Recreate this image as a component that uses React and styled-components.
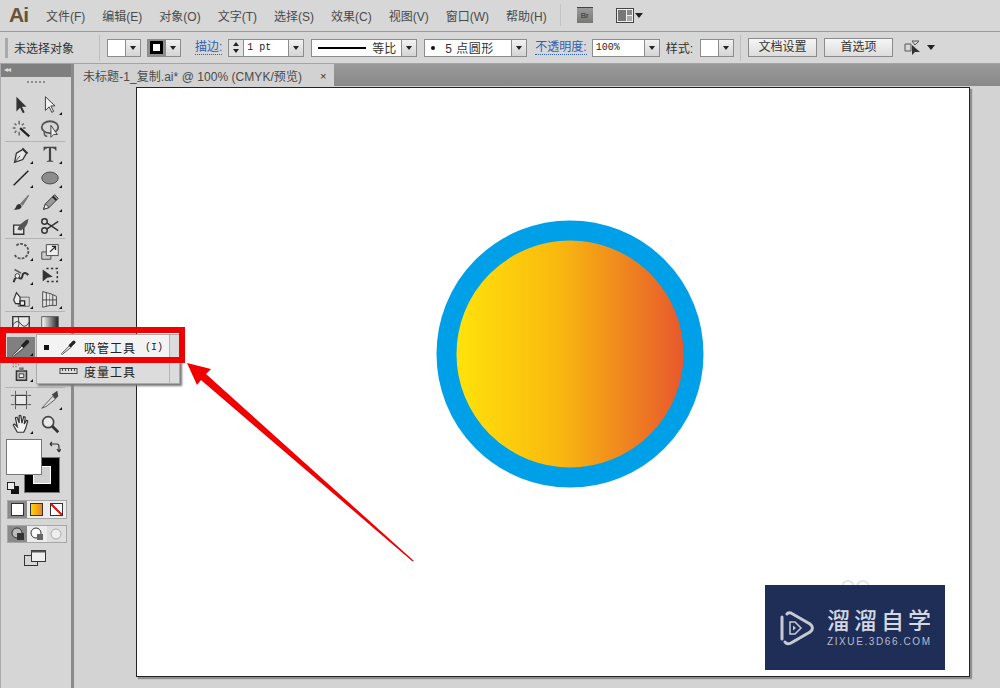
import React from 'react';
import styled, { createGlobalStyle } from 'styled-components';

const GlobalStyle = createGlobalStyle`
  html, body {
    margin: 0;
    padding: 0;
    background: #d6d6d6;
  }
  body {
    font-family: "Liberation Sans", "Noto Sans CJK SC", sans-serif;
    overflow: hidden;
  }
`;

const Page = styled.div`
  position: relative;
  width: 1000px;
  height: 688px;
  overflow: hidden;
  display: flex;
  flex-direction: column;
  color: #3c3c3c;
`;

const MenuBar = styled.div`
  height: 30px;
  flex: none;
  display: flex;
  align-items: center;
  padding: 0 0 1px 9px;
  background: #d7d7d7;
  border-bottom: 1px solid #9a9a9a;
`;

const Logo = styled.div`
  width: 20px;
  margin-right: 17px;
  font: bold 21px "Liberation Sans", sans-serif;
  color: #6a5233;
  letter-spacing: -1px;
`;

const MenuList = styled.div`
  display: flex;
  gap: 17px;
`;

const MenuItem = styled.span`
  font-size: 12px;
  color: #4a4a4a;
  white-space: nowrap;
`;

const MenuDivider = styled.div`
  width: 1px;
  height: 22px;
  margin: 0 16px 0 13px;
  background: #c4c4c4;
`;

const BridgeIcon = styled.div`
  width: 16px;
  height: 15px;
  border-top: 1px solid #444;
  background: linear-gradient(#9a9a9a, #777);
  font-size: 8px;
  color: #333;
  text-align: center;
  line-height: 15px;
  margin-right: 23px;
`;

const ControlBar = styled.div`
  height: 32px;
  flex: none;
  display: flex;
  align-items: center;
  padding-left: 5px;
  background: #d7d7d7;
  border-bottom: 1px solid #a4a4a4;
  box-sizing: border-box;
`;

const Grip = styled.div`
  width: 3px;
  height: 20px;
  margin-right: 6px;
  background: #a9a9a9;
`;

const BarLabel = styled.span`
  font-size: 12px;
  color: #333;
  white-space: nowrap;
  margin-left: ${(p) => p.$ml || 0}px;
`;

const LinkLabel = styled.span`
  font-size: 12px;
  color: #2f5fb4;
  white-space: nowrap;
  margin-left: ${(p) => p.$ml || 0}px;
  border-bottom: 1px dotted #2f5fb4;
  line-height: 14px;
`;

const BarDivider = styled.div`
  width: 1px;
  height: 26px;
  flex: none;
  margin-left: ${(p) => p.$ml || 0}px;
  background: #bdbdbd;
`;

const Combo = styled.div`
  display: flex;
  flex: none;
  align-items: center;
  width: ${(p) => p.$w}px;
  height: 18px;
  margin-left: ${(p) => p.$ml || 0}px;
  border: 1px solid #8c8c8c;
  box-sizing: border-box;
  background: #fff;
`;

const ComboBody = styled.div`
  flex: 1;
  display: flex;
  align-items: center;
  gap: 6px;
  height: 100%;
  padding-left: ${(p) => p.$pl || 0}px;
  font-size: ${(p) => p.$size || 11}px;
  letter-spacing: ${(p) => p.$track || 0}px;
  color: #333;
  white-space: nowrap;
  overflow: hidden;
`;

const ComboArrow = styled.div`
  width: 15px;
  height: 100%;
  flex: none;
  display: flex;
  align-items: center;
  justify-content: center;
  background: linear-gradient(#f2f2f2, #d4d4d4);
  border-left: 1px solid #8c8c8c;
  box-sizing: border-box;

  &::after {
    content: '';
    border-left: 3px solid transparent;
    border-right: 3px solid transparent;
    border-top: 4px solid #222;
  }
`;

const Spinner = styled.div`
  width: 15px;
  height: 100%;
  flex: none;
  display: flex;
  flex-direction: column;
  align-items: center;
  justify-content: space-evenly;
  background: #e2e2e2;
  border-right: 1px solid #8c8c8c;
  box-sizing: border-box;
`;

const SpinUp = styled.i`
  border-left: 3px solid transparent;
  border-right: 3px solid transparent;
  border-bottom: 4px solid #222;
`;

const SpinDown = styled.i`
  border-left: 3px solid transparent;
  border-right: 3px solid transparent;
  border-top: 4px solid #222;
`;

const StrokeSwatch = styled.div`
  flex: 1;
  height: 100%;
  display: flex;
  align-items: center;
  justify-content: center;
  background: #8f8f8f;

  &::after {
    content: '';
    width: 7px;
    height: 7px;
    background: #fff;
    border: 3px solid #000;
  }
`;

const StrokeLine = styled.div`
  width: 48px;
  height: 2px;
  flex: none;
  background: #000;
`;

const Dot = styled.i`
  width: 4px;
  height: 4px;
  flex: none;
  border-radius: 50%;
  background: #111;
`;

const MonoText = styled.span`
  font-family: "Liberation Mono", monospace;
  font-size: 10px;
  color: #222;
`;

const BarButton = styled.div`
  width: ${(p) => p.$w}px;
  height: 19px;
  flex: none;
  margin-left: ${(p) => p.$ml || 0}px;
  border: 1px solid #8c8c8c;
  box-sizing: border-box;
  background: linear-gradient(#f6f6f6, #dcdcdc);
  font-size: 12px;
  line-height: 17px;
  text-align: center;
  color: #333;
`;

const CaretDown = styled.i`
  margin-left: ${(p) => p.$ml || 0}px;
  border-left: 4px solid transparent;
  border-right: 4px solid transparent;
  border-top: 5px solid #222;
`;

const TargetIcon = styled.svg`
  flex: none;
  margin-left: 11px;
`;

const Body = styled.div`
  flex: 1;
  display: flex;
  min-height: 0;
`;

const ToolPanel = styled.aside`
  width: 70px;
  flex: none;
  display: flex;
  flex-direction: column;
  background: #d6d6d6;
  border-left: 1px solid #aaa;
  border-right: 3px solid #8b8b8b;
`;

const PanelHeader = styled.div`
  height: 13px;
  flex: none;
  padding-left: 3px;
  background: #7f7f7f;
  color: #ddd;
  font-size: 8px;
  line-height: 12px;
  letter-spacing: -1px;
`;

const PanelGrip = styled.div`
  width: 18px;
  height: 0;
  flex: none;
  margin: 4px auto 10px;
  border-top: 2px dotted #8d8d8d;
`;

const ToolGroup = styled.div`
  display: grid;
  flex: none;
  grid-template-columns: 29px 29px;
  grid-auto-rows: 24px;
  width: 60px;
  padding: 0 0 ${(p) => p.$pad || 0}px 1px;
  margin-left: 4px;
  box-sizing: border-box;
  border-bottom: ${(p) => (p.$last ? 'none' : '1px solid #b4b4b4')};
`;

const ToolCell = styled.div`
  position: relative;
  display: flex;
  align-items: center;
  justify-content: center;
  ${(p) => p.$active && 'margin: 1px 0 2px 1px; background: #808080;'}
  ${(p) =>
    p.$more &&
    `&::after {
      content: '';
      position: absolute;
      right: 2px;
      bottom: 2px;
      border-left: 3px solid transparent;
      border-bottom: 3px solid #111;
    }`}
`;

const SwatchArea = styled.div`
  position: relative;
  height: 54px;
  flex: none;
  margin-top: 3px;
`;

const FrontFill = styled.div`
  position: absolute;
  left: 5px;
  top: 0;
  width: 34px;
  height: 34px;
  background: #fff;
  border: 1px solid #777;
  z-index: 1;
`;

const BackStroke = styled.div`
  position: absolute;
  left: 24px;
  top: 19px;
  width: 34px;
  height: 34px;
  box-sizing: border-box;
  border: 8px solid #000;
  outline: 1px solid #777;
  background: #cfcfcf;
  box-shadow: inset 0 0 0 1px #fff;
`;

const SwapIcon = styled.svg`
  position: absolute;
  left: 48px;
  top: 2px;
`;

const DefaultIcon = styled.svg`
  position: absolute;
  left: 6px;
  top: 43px;
`;

const ModeRow = styled.div`
  display: flex;
  flex: none;
  width: 60px;
  height: ${(p) => p.$h}px;
  margin: ${(p) => p.$mt}px 0 0 6px;
  border: 1px solid #a6a6a6;
  box-sizing: border-box;
`;

const ModeCell = styled.div`
  flex: 1;
  display: flex;
  align-items: center;
  justify-content: center;
  background: ${(p) => (p.$on ? '#8a8a8a' : p.$dim ? '#dedede' : '#ececec')};
`;

const ModeSwatch = styled.div`
  width: 13px;
  height: 13px;
  box-sizing: border-box;
  border: 1px solid #333;
  background: ${(p) => p.$bg};
`;

const ScreenIcon = styled.svg`
  display: block;
  flex: none;
  margin: 7px 0 0 23px;
`;

const Main = styled.main`
  flex: 1;
  display: flex;
  flex-direction: column;
  min-width: 0;
`;

const TabStrip = styled.div`
  height: 22px;
  flex: none;
  display: flex;
  background: linear-gradient(#9a9a9a, #888);
`;

const Tab = styled.div`
  width: 260px;
  display: flex;
  align-items: center;
  gap: 18px;
  padding: 1px 0 0 9px;
  box-sizing: border-box;
  background: #d2d2d2;
  font-size: 12px;
  letter-spacing: 0.05px;
  color: #4a4a4a;
  white-space: nowrap;
`;

const TabClose = styled.span`
  font-size: 11px;
  color: #333;
`;

const Workspace = styled.div`
  flex: 1;
  padding: 1px 30px 11px 62px;
  background: #d3d3d3;
  min-height: 0;
`;

const Artboard = styled.div`
  position: relative;
  height: 100%;
  box-sizing: border-box;
  background: #fff;
  border: 1px solid #222;
  box-shadow: 2px 2px 1px #8f8f8f;
`;

const CircleArt = styled.svg`
  position: absolute;
  left: 299px;
  top: 132px;
`;

const GhostRings = styled.svg`
  position: absolute;
  left: 702px;
  top: 491px;
`;

const Watermark = styled.div`
  position: absolute;
  left: 628px;
  top: 497px;
  width: 180px;
  height: 85px;
  display: flex;
  align-items: center;
  background: #1f2e57;
  color: #d5d8e0;
`;

const WatermarkMark = styled.svg`
  flex: none;
  margin-left: 14px;
`;

const WatermarkText = styled.div`
  margin-left: 12px;
  display: flex;
  flex-direction: column;
  gap: 3px;
`;

const WatermarkTitle = styled.div`
  font-size: 23px;
  line-height: 24px;
  font-weight: 500;
  letter-spacing: 4px;
  white-space: nowrap;
`;

const WatermarkUrl = styled.div`
  font-size: 10px;
  line-height: 11px;
  letter-spacing: 1.6px;
  white-space: nowrap;
  color: #b9bdc9;
`;

const Flyout = styled.div`
  position: absolute;
  left: 36px;
  top: 334px;
  width: 144px;
  height: 50px;
  display: flex;
  flex-direction: column;
  background: #dcdcdc;
  box-shadow: 2px 2px 2px #777;
  border: 1px solid #aaa;
  box-sizing: border-box;
`;

const FlyoutRow = styled.div`
  height: 24px;
  display: flex;
  align-items: center;
  margin-right: 9px;
  border-right: 1px solid #b5b5b5;
  font-size: 12px;
  letter-spacing: 1px;
  color: #222;
  background: ${(p) => (p.$on ? '#f3f3f3' : 'transparent')};
  white-space: nowrap;
`;

const FlyoutMark = styled.i`
  width: 5px;
  height: 5px;
  flex: none;
  margin: 0 10px 0 7px;
  background: ${(p) => (p.$on ? '#111' : 'transparent')};
`;

const FlyoutIcon = styled.svg`
  flex: none;
  margin-right: 6px;
`;

const FlyoutKey = styled.span`
  margin-left: 9px;
  font-family: "Liberation Mono", monospace;
  font-size: 10px;
  letter-spacing: 0;
`;

const Highlight = styled.div`
  position: absolute;
  left: 0;
  top: 327px;
  width: 185px;
  height: 36px;
  box-sizing: border-box;
  border: 6px solid #f00000;
  pointer-events: none;
`;

const ArrowOverlay = styled.svg`
  position: absolute;
  left: 0;
  top: 0;
  pointer-events: none;
`;

const icons = {
  arrow: <path d="M7 3 L7 19 L11 15 L14 21 L16 20 L13 14 L18 14 Z" fill="#333" />,
  hollow: <path d="M7 3 L7 18 L11 14 L14 20 L16 19 L13 13 L17.5 13 Z" fill="#f2f2f2" stroke="#333" />,
  wand: (
    <>
      <path d="M11 11 L21 20" stroke="#222" strokeWidth="2.4" />
      <path d="M10 3 V7 M10 15 V19 M3 11 H6 M14 11 H17 M5 6 L7 8 M15 6 L13 8 M5 16 L7 14" stroke="#666" strokeWidth="1.6" />
    </>
  ),
  lasso: (
    <>
      <ellipse cx="12" cy="10" rx="9" ry="6.5" fill="none" stroke="#555" strokeWidth="2" />
      <path d="M13 8 L13 21 L16 18 L20 18 Z" fill="#eee" stroke="#333" />
      <path d="M6 15 Q5 20 9 20" fill="none" stroke="#555" strokeWidth="1.6" />
    </>
  ),
  pen: (
    <>
      <path d="M5 21 L7 11 L14 7 L18 11 L14 18 Z" fill="#e8e8e8" stroke="#333" strokeWidth="1.4" />
      <path d="M5 21 L11 14" stroke="#333" />
      <path d="M14 5 L20 11 L18 12 L13 7 Z" fill="#333" />
    </>
  ),
  type: (
    <path
      d="M5 4 H19 V8.500 H18.200 Q17.500 5.500 13.200 5.500 V18.500 Q13.200 19.500 15.500 19.500 V20.500 H8.500 V19.500 Q10.800 19.500 10.800 18.500 V5.500 Q6.500 5.500 5.800 8.500 H5 Z"
      fill="#444"
    />
  ),
  line: <path d="M4 20 L20 4" stroke="#222" strokeWidth="1.6" />,
  ellipse: <ellipse cx="12" cy="12" rx="9" ry="6.5" fill="#8c8c8c" stroke="#444" />,
  brush: (
    <>
      <path d="M11 14 L20 4 L21 5 L14 16 Z" fill="#777" />
      <path d="M3 20 Q6 20 7 16 Q9 13 12 15 Q14 18 10 20 Q6 21 3 20 Z" fill="#333" />
    </>
  ),
  pencil: (
    <>
      <path d="M5 20 L7 14 L17 4 L21 8 L11 18 Z" fill="#999" stroke="#333" />
      <path d="M15 6 L19 10" stroke="#222" strokeWidth="2" />
      <path d="M5 20 L7 14 L11 18 Z" fill="#eee" stroke="#333" />
    </>
  ),
  eraser: (
    <>
      <path d="M4 11 H15 V21 H4 Z" fill="#e6e6e6" stroke="#333" strokeWidth="1.5" />
      <path d="M8 16 Q10 9 20 4 Q20 12 12 17 Z" fill="#555" />
    </>
  ),
  scissors: (
    <>
      <circle cx="6" cy="7" r="3" fill="none" stroke="#333" strokeWidth="1.6" />
      <circle cx="6" cy="17" r="3" fill="none" stroke="#333" strokeWidth="1.6" />
      <path d="M8.500 8.500 L21 17 M8.500 15.500 L21 7" stroke="#333" strokeWidth="1.6" />
    </>
  ),
  rotate: <path d="M7 6 A8 8 0 1 1 5 16" fill="none" stroke="#555" strokeWidth="2" strokeDasharray="3 1.4" />,
  scale: (
    <>
      <path d="M3 13 H13 V21 H3 Z" fill="#ccc" stroke="#444" />
      <path d="M8 5 H21 V17 H8 Z" fill="#eee" stroke="#444" />
      <path d="M12 13 L18 7 M14 7 H18 V11" fill="none" stroke="#222" strokeWidth="1.4" />
    </>
  ),
  warp: (
    <>
      <path d="M4 20 Q6 12 10 15 Q13 18 14 11 Q16 8 20 12" fill="none" stroke="#333" strokeWidth="2.2" />
      <circle cx="8" cy="13" r="2.500" fill="#eee" stroke="#333" />
      <path d="M5 6 L12 10" stroke="#555" strokeWidth="1.6" />
    </>
  ),
  freeTransform: (
    <>
      <path d="M8 5 H20 V19 H8" fill="none" stroke="#333" strokeDasharray="2.5 2.5" strokeWidth="1.6" />
      <path d="M4 6 L4 19 L9 15 L15 14 Z" fill="#333" />
    </>
  ),
  shapeBuilder: (
    <>
      <path d="M9 10 H21 V20 H9 Z" fill="#d8d8d8" stroke="#666" />
      <path d="M4 13 L7 5 L11 10 L11 17 L6 17 Z" fill="#eee" stroke="#333" strokeWidth="1.3" />
      <path d="M11 14 H16 V19 H11 Z" fill="#eee" stroke="#222" strokeWidth="1.4" />
    </>
  ),
  perspective: (
    <>
      <path d="M4 4 L12 6 V19 L4 21 Z" fill="#e6e6e6" stroke="#444" />
      <path d="M12 6 L19 9 V19 H12" fill="#ddd" stroke="#444" />
      <path d="M8 5 V20 M15 7.500 V19 M4 13 H19" stroke="#444" />
    </>
  ),
  mesh: (
    <>
      <path d="M3 4 H21 V20 H3 Z" fill="#e6e6e6" stroke="#333" strokeWidth="1.5" />
      <path d="M3 13 Q8 6 12 12 T21 10 M9 4 Q11 12 8 20" fill="none" stroke="#333" />
    </>
  ),
  gradient: (
    <>
      <defs>
        <linearGradient id="toolGrad">
          <stop offset="0" stopColor="#fff" />
          <stop offset="1" stopColor="#222" />
        </linearGradient>
      </defs>
      <rect x="3" y="4" width="18" height="16" fill="url(#toolGrad)" stroke="#555" />
    </>
  ),
  eyedropper: (
    <>
      <path d="M5 20 L4 21 L3 20 L4 19 L13 10 L15 12 Z" fill="#eee" stroke="#333" />
      <path d="M12 9 L18 3 Q21 3 21 6 L15 12 Z" fill="#222" />
    </>
  ),
  blend: <path d="M4 6 H10 V12 H4 Z M14 12 H20 V18 H14 Z" fill="#999" stroke="#444" />,
  spray: (
    <>
      <path d="M7 11 H18 V21 H7 Z" fill="#bbb" stroke="#333" strokeWidth="1.6" />
      <path d="M10 14 H15 V18 H10 Z" fill="#eee" stroke="#333" />
      <path d="M10 7 H15 V11 H10 Z" fill="#777" />
      <path d="M3 3 H4 M6 3 H7 M3 6 H4 M6 6 H7 M9 4 H10" stroke="#666" strokeWidth="1.4" />
    </>
  ),
  graph: <path d="M4 20 V14 H9 V20 M10 20 V8 H15 V20 M16 20 V11 H20 V20" fill="#999" stroke="#444" />,
  artboard: (
    <>
      <path d="M6 7 H18 V17 H6 Z" fill="#e8e8e8" stroke="#444" strokeWidth="1.3" />
      <path d="M6 2 V6 M18 2 V6 M6 18 V22 M18 18 V22 M1 7 H5 M19 7 H23 M1 17 H5 M19 17 H23" stroke="#555" />
    </>
  ),
  slice: (
    <>
      <path d="M3 21 L15 8 L18 11 L8 19 Z" fill="#ddd" stroke="#555" />
      <path d="M14 6 L20 2 L21 8 L18 11 Z" fill="#444" />
    </>
  ),
  hand: (
    <path
      d="M8 21 L4 14 Q3 12 5 12 L8 15 L6 6 Q6 4 8 5 L10 11 L10 3 Q12 2 12 4 L13 11 L15 4 Q17 4 16.500 6 L15.500 12 L18 8 Q20 8 19 10 L17 17 L15 21 Z"
      fill="#f2f2f2"
      stroke="#333"
      strokeWidth="1.3"
    />
  ),
  zoom: (
    <>
      <circle cx="10" cy="10" r="6" fill="#e8e8e8" stroke="#444" strokeWidth="1.8" />
      <path d="M14.500 14.500 L21 21" stroke="#333" strokeWidth="3" />
    </>
  ),
};

function Icon({ name, size = 22 }) {
  return (
    <svg width={size} height={size} viewBox="0 0 24 24">
      {icons[name]}
    </svg>
  );
}

const toolGroups = [
  { tools: [['arrow'], ['hollow', 1], ['wand'], ['lasso']] },
  { tools: [['pen', 1], ['type', 1], ['line', 1], ['ellipse', 1], ['brush'], ['pencil', 1], ['eraser'], ['scissors', 1]] },
  { tools: [['rotate', 1], ['scale', 1], ['warp', 1], ['freeTransform'], ['shapeBuilder', 1], ['perspective', 1]] },
  { tools: [['mesh'], ['gradient'], ['eyedropper', 1, true], ['blend'], ['spray', 1], ['graph', 1]], pad: 3 },
  { tools: [['artboard'], ['slice', 1], ['hand', 1], ['zoom']], last: true },
];

const menus = ['文件(F)', '编辑(E)', '对象(O)', '文字(T)', '选择(S)', '效果(C)', '视图(V)', '窗口(W)', '帮助(H)'];

export default function App() {
  return (
    <Page>
      <GlobalStyle />
      <MenuBar>
        <Logo>Ai</Logo>
        <MenuList>
          {menus.map((m) => (
            <MenuItem key={m}>{m}</MenuItem>
          ))}
        </MenuList>
        <MenuDivider />
        <BridgeIcon>Br</BridgeIcon>
        <svg width="18" height="15" viewBox="0 0 18 15">
          <rect x="0.500" y="0.500" width="17" height="14" fill="#eee" stroke="#444" />
          <rect x="2" y="2" width="8" height="11" fill="#777" />
          <rect x="11" y="2" width="5" height="5" fill="#888" />
          <rect x="11" y="8" width="5" height="5" fill="#aaa" />
        </svg>
        <CaretDown $ml={1} />
      </MenuBar>

      <ControlBar>
        <Grip />
        <BarLabel>未选择对象</BarLabel>
        <BarDivider $ml={25} />
        <Combo $w={34} $ml={7}>
          <ComboBody />
          <ComboArrow />
        </Combo>
        <Combo $w={34} $ml={6}>
          <StrokeSwatch />
          <ComboArrow />
        </Combo>
        <LinkLabel $ml={14}>描边:</LinkLabel>
        <Combo $w={76} $ml={6}>
          <Spinner>
            <SpinUp />
            <SpinDown />
          </Spinner>
          <ComboBody $pl={3}>
            <MonoText>1 pt</MonoText>
          </ComboBody>
          <ComboArrow />
        </Combo>
        <Combo $w={106} $ml={7}>
          <ComboBody $pl={6} $size={12}>
            <StrokeLine />
            等比
          </ComboBody>
          <ComboArrow />
        </Combo>
        <Combo $w={103} $ml={7}>
          <ComboBody $pl={6} $size={12} $track={0.5}>
            <Dot />
            <span>&nbsp;5 点圆形</span>
          </ComboBody>
          <ComboArrow />
        </Combo>
        <LinkLabel $ml={8}>不透明度:</LinkLabel>
        <Combo $w={68} $ml={5}>
          <ComboBody $pl={3}>
            <MonoText>100%</MonoText>
          </ComboBody>
          <ComboArrow />
        </Combo>
        <BarLabel $ml={6}>样式:</BarLabel>
        <Combo $w={34} $ml={7}>
          <ComboBody />
          <ComboArrow />
        </Combo>
        <BarDivider $ml={6} />
        <BarButton $w={69} $ml={7}>文档设置</BarButton>
        <BarButton $w={69} $ml={7}>首选项</BarButton>
        <TargetIcon width="17" height="16" viewBox="0 0 17 16">
          <path d="M1 4 H7 V11 H1 Z" fill="none" stroke="#555" />
          <path d="M8 1 H15 M8 1 L11 5 L15 1" fill="none" stroke="#555" />
          <path d="M8 5 L8 15 L11 12 L16 12 Z" fill="#333" />
        </TargetIcon>
        <CaretDown $ml={6} />
      </ControlBar>

      <Body>
        <ToolPanel>
          <PanelHeader>◂◂</PanelHeader>
          <PanelGrip />
          {toolGroups.map((group, i) => (
            <ToolGroup key={i} $last={group.last} $pad={group.pad}>
              {group.tools.map(([name, more, active]) => (
                <ToolCell key={name} $more={more} $active={active}>
                  <Icon name={name} />
                </ToolCell>
              ))}
            </ToolGroup>
          ))}
          <SwatchArea>
            <FrontFill />
            <BackStroke />
            <SwapIcon width="12" height="12" viewBox="0 0 12 12">
              <path d="M1 3 H8 Q10 3 10 6 V10 M1 3 L3 1 M1 3 L3 5 M10 11 L8 8 M10 11 L12 8" fill="none" stroke="#333" strokeWidth="1.2" />
            </SwapIcon>
            <DefaultIcon width="12" height="12" viewBox="0 0 12 12">
              <rect x="4.500" y="4.500" width="7" height="7" fill="#111" stroke="#111" />
              <rect x="0.500" y="0.500" width="7" height="7" fill="#eee" stroke="#222" />
            </DefaultIcon>
          </SwatchArea>
          <ModeRow $mt={7} $h={19}>
            <ModeCell $on>
              <ModeSwatch $bg="#fff" />
            </ModeCell>
            <ModeCell>
              <ModeSwatch $bg="linear-gradient(90deg,#ffd500,#e8822a)" />
            </ModeCell>
            <ModeCell>
              <ModeSwatch $bg="linear-gradient(to top right,#fff 42%,#e21b1b 43%,#e21b1b 57%,#fff 58%)" />
            </ModeCell>
          </ModeRow>
          <ModeRow $mt={6} $h={18}>
            <ModeCell $on>
              <svg width="14" height="14" viewBox="0 0 14 14">
                <circle cx="6" cy="6" r="5" fill="#bbb" stroke="#333" />
                <rect x="6" y="6" width="7" height="7" fill="#333" />
              </svg>
            </ModeCell>
            <ModeCell>
              <svg width="14" height="14" viewBox="0 0 14 14">
                <circle cx="6" cy="6" r="5" fill="#fff" stroke="#333" />
                <rect x="7" y="7" width="6" height="6" fill="#666" />
              </svg>
            </ModeCell>
            <ModeCell $dim>
              <svg width="14" height="14" viewBox="0 0 14 14">
                <circle cx="7" cy="7" r="5" fill="#eee" stroke="#aaa" />
              </svg>
            </ModeCell>
          </ModeRow>
          <ScreenIcon width="22" height="16" viewBox="0 0 22 16">
            <rect x="0.500" y="5.500" width="13" height="10" fill="#d6d6d6" stroke="#333" />
            <rect x="7.500" y="0.500" width="14" height="11" fill="#eee" stroke="#333" />
            <rect x="7.500" y="0.500" width="14" height="2" fill="#555" />
          </ScreenIcon>
        </ToolPanel>

        <Main>
          <TabStrip>
            <Tab>
              未标题-1_复制.ai* @ 100% (CMYK/预览)
              <TabClose>×</TabClose>
            </Tab>
          </TabStrip>
          <Workspace>
            <Artboard>
              <CircleArt width="268" height="268" viewBox="0 0 268 268">
                <defs>
                  <linearGradient id="sunFill">
                    <stop offset="0" stopColor="#ffe60a" />
                    <stop offset="0.45" stopColor="#f9b90f" />
                    <stop offset="1" stopColor="#e6502f" />
                  </linearGradient>
                </defs>
                <circle cx="134" cy="134" r="123.500" fill="url(#sunFill)" stroke="#00a0e9" strokeWidth="20" />
              </CircleArt>
              <GhostRings width="32" height="8" viewBox="0 0 32 8">
                <circle cx="9" cy="8" r="6" fill="none" stroke="#e4e4e4" strokeWidth="2" />
                <circle cx="24" cy="8" r="6" fill="none" stroke="#e4e4e4" strokeWidth="2" />
              </GhostRings>
              <Watermark>
                <WatermarkMark width="36" height="36" viewBox="0 0 36 36">
                  <path d="M3 7 V29" fill="none" stroke="#c6cad4" strokeWidth="3" strokeLinecap="round" />
                  <path
                    d="M8 4 Q9 2 12 3 L31 14 Q36 18 31 22 L12 33 Q8 35 6 32"
                    fill="none"
                    stroke="#c6cad4"
                    strokeWidth="3"
                    strokeLinecap="round"
                  />
                  <path d="M11 12 H16 L22 18 L16 24 H11 Z" fill="none" stroke="#c6cad4" strokeWidth="1.500" />
                  <path d="M14 15.500 L17 18 L14 20.500 Z" fill="#c6cad4" />
                </WatermarkMark>
                <WatermarkText>
                  <WatermarkTitle>溜溜自学</WatermarkTitle>
                  <WatermarkUrl>ZIXUE.3D66.COM</WatermarkUrl>
                </WatermarkText>
              </Watermark>
            </Artboard>
          </Workspace>
        </Main>
      </Body>

      <Flyout>
        <FlyoutRow $on>
          <FlyoutMark $on />
          <FlyoutIcon width="19" height="19" viewBox="0 0 24 24">
            {icons.eyedropper}
          </FlyoutIcon>
          吸管工具
          <FlyoutKey>(I)</FlyoutKey>
        </FlyoutRow>
        <FlyoutRow>
          <FlyoutMark />
          <FlyoutIcon width="19" height="10" viewBox="0 0 18 10">
            <rect x="0.500" y="2.500" width="17" height="5" fill="#ddd" stroke="#444" />
            <path d="M3 3 V5 M6 3 V5 M9 3 V5 M12 3 V5 M15 3 V5" stroke="#444" />
          </FlyoutIcon>
          度量工具
        </FlyoutRow>
      </Flyout>

      <Highlight />

      <ArrowOverlay width="1000" height="688" viewBox="0 0 1000 688">
        <polygon points="187,363 211,369 206,374 414,561 412,561 201,380 197,385" fill="#f00000" />
      </ArrowOverlay>
    </Page>
  );
}
